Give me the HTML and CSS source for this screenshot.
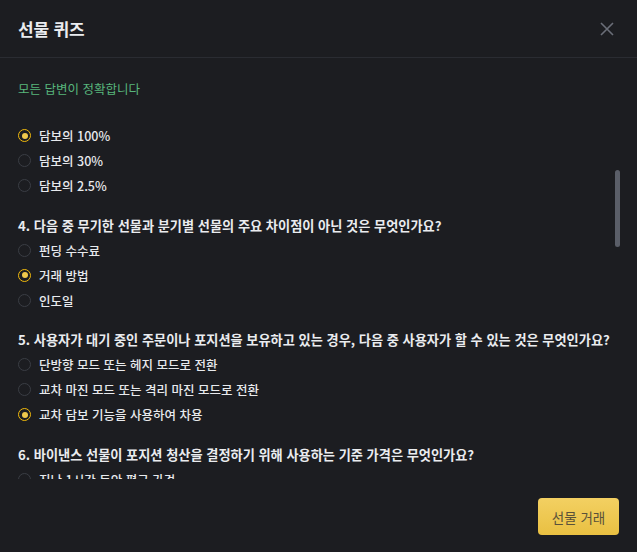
FILE: index.html
```html
<!DOCTYPE html>
<html lang="ko">
<head>
<meta charset="utf-8">
<link rel="stylesheet" href="styles.css">
</head>
<body>
<div class="modal">
  <header class="head">
    <h1 class="title">선물 퀴즈</h1>
    <svg class="close" width="14" height="14" viewBox="0 0 14 14"><path d="M1 1L13 13M13 1L1 13" stroke="currentColor" stroke-width="1.6" fill="none"/></svg>
  </header>
  <main class="body">
    <p class="result">모든 답변이 정확합니다</p>
    <ul class="opts first">
      <li class="opt on"><span class="radio"></span>담보의 100%</li>
      <li class="opt"><span class="radio"></span>담보의 30%</li>
      <li class="opt"><span class="radio"></span>담보의 2.5%</li>
    </ul>
    <p class="q">4. 다음 중 무기한 선물과 분기별 선물의 주요 차이점이 아닌 것은 무엇인가요?</p>
    <ul class="opts">
      <li class="opt"><span class="radio"></span>펀딩 수수료</li>
      <li class="opt on"><span class="radio"></span>거래 방법</li>
      <li class="opt"><span class="radio"></span>인도일</li>
    </ul>
    <p class="q">5. 사용자가 대기 중인 주문이나 포지션을 보유하고 있는 경우, 다음 중 사용자가 할 수 있는 것은 무엇인가요?</p>
    <ul class="opts">
      <li class="opt"><span class="radio"></span>단방향 모드 또는 헤지 모드로 전환</li>
      <li class="opt"><span class="radio"></span>교차 마진 모드 또는 격리 마진 모드로 전환</li>
      <li class="opt on"><span class="radio"></span>교차 담보 기능을 사용하여 차용</li>
    </ul>
    <p class="q">6. 바이낸스 선물이 포지션 청산을 결정하기 위해 사용하는 기준 가격은 무엇인가요?</p>
    <ul class="opts">
      <li class="opt"><span class="radio"></span>지난 1시간 동안 평균 가격</li>
      <li class="opt"><span class="radio"></span>마크 가격</li>
    </ul>
    <div class="scrollbar"></div>
  </main>
  <footer class="foot">
    <button class="btn">선물 거래</button>
  </footer>
</div>
</body>
</html>
```
FILE: styles.css
```css
* { box-sizing: border-box; }
html, body { margin: 0; padding: 0; }
body {
  background: #1c1d21;
  font-family: "Noto Sans CJK KR", "Noto Sans", sans-serif;
  color: #eaecef;
}
.modal {
  width: 637px;
  height: 552px;
  display: flex;
  flex-direction: column;
  background: #1c1d21;
}
.head {
  height: 58px;
  flex: none;
  display: flex;
  align-items: center;
  justify-content: space-between;
  padding: 0 23px 0 18px;
  border-bottom: 1px solid #2a2c32;
}
.title {
  margin: 0;
  font-size: 17px;
  font-weight: 700;
  color: #eaecef;
  letter-spacing: -0.2px;
}
.close { color: #6a6e78; }
.body {
  flex: 1;
  position: relative;
  overflow: hidden;
  padding: 21px 18px 0;
}
.result {
  margin: 0;
  font-size: 12.5px;
  line-height: 20px;
  color: #58b67c;
}
.opts {
  list-style: none;
  margin: 0;
  padding: 0;
}
.opts.first { margin-top: 24px; }
.opt {
  display: flex;
  align-items: center;
  gap: 8px;
  height: 25px;
  font-size: 12.5px;
  font-weight: 500;
  color: #e8eaed;
}
.radio {
  width: 13px;
  height: 13px;
  border-radius: 50%;
  border: 1px solid #3a3d44;
  flex: none;
  display: flex;
  align-items: center;
  justify-content: center;
}
.opt.on .radio { border: 1.5px solid #f0b90b; }
.opt.on .radio::after {
  content: "";
  width: 6px;
  height: 6px;
  border-radius: 50%;
  background: #f0c94c;
}
.q {
  margin: 14.5px 0 0;
  height: 25px;
  line-height: 25px;
  font-size: 13.2px;
  font-weight: 700;
  color: #eaecef;
  white-space: nowrap;
}
.scrollbar {
  position: absolute;
  right: 17px;
  top: 112px;
  width: 5px;
  height: 77px;
  border-radius: 3px;
  background: #5a5e68;
}
.foot {
  flex: none;
  height: 73px;
  display: flex;
  justify-content: flex-end;
  align-items: flex-start;
  padding: 19px 18px 0;
}
.btn {
  width: 81px;
  height: 37px;
  border: none;
  border-radius: 4px;
  background: linear-gradient(#f3d062, #e9c042);
  color: #5a513a;
  font-family: inherit;
  font-size: 13.5px;
  font-weight: 400;
}
```
